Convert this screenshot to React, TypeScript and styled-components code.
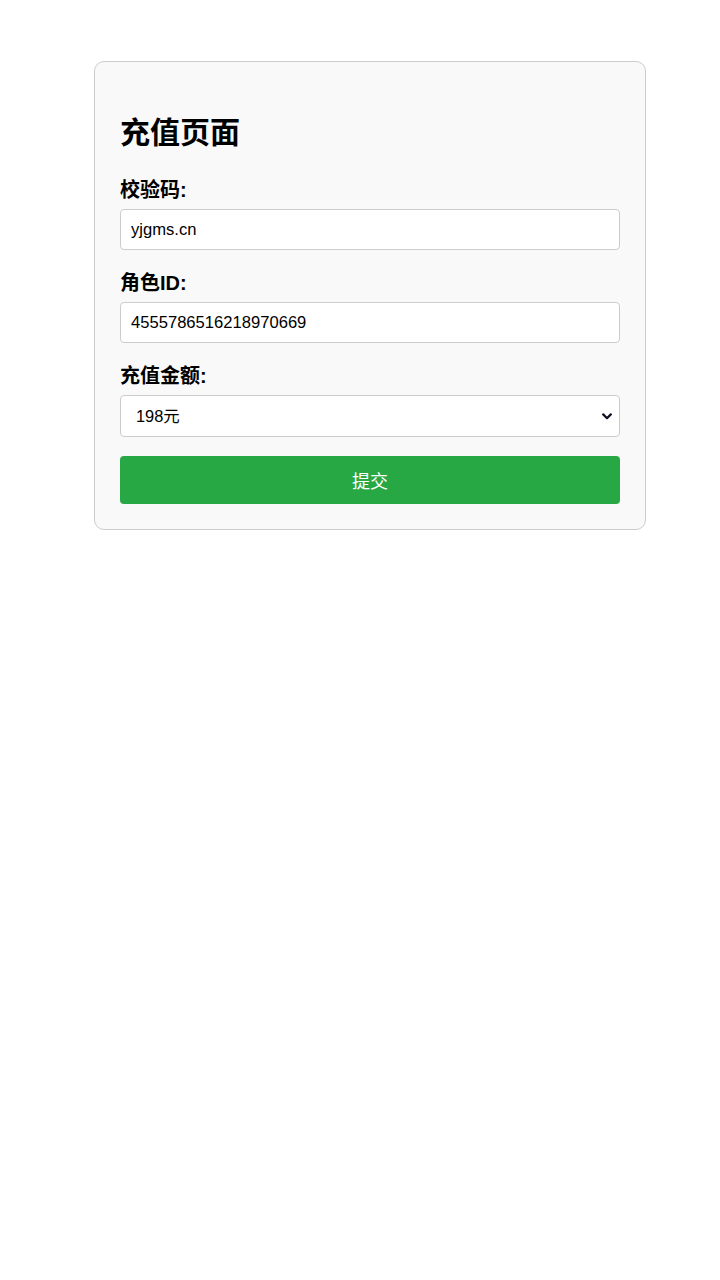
import React from "react";
import styled, { createGlobalStyle } from "styled-components";

const Global = createGlobalStyle`
  body {
    margin: 0;
    background: #fff;
    font-family: "Liberation Sans", Arial, "Noto Sans CJK SC", sans-serif;
    color: #000;
  }
`;

const Page = styled.div`
  display: flex;
  justify-content: center;
  padding: 61px 0 0 20px;
`;

const Card = styled.form`
  width: 500px;
  padding: 25px;
  background: #f9f9f9;
  border: 1px solid #ccc;
  border-radius: 10px;
  display: flex;
  flex-direction: column;
`;

const Title = styled.h2`
  margin: 28px 0 27px;
  font-size: 30px;
  line-height: 36px;
  font-weight: bold;
`;

const Label = styled.label`
  display: block;
  font-size: 20px;
  font-weight: bold;
  line-height: 24px;
  margin-bottom: 7px;
`;

const Field = styled.div`
  display: flex;
  flex-direction: column;
  margin-bottom: 21px;
`;

const Input = styled.input`
  box-sizing: border-box;
  width: 100%;
  height: 41px;
  padding: 10px;
  font-size: 16.6px;
  font-family: "Liberation Sans", Arial, "Noto Sans CJK SC", sans-serif;
  border: 1px solid #ccc;
  border-radius: 4px;
  background: #fff;
  color: #000;
  outline: none;
`;

const SelectWrap = styled.div`
  position: relative;
  width: 100%;
`;

const Select = styled.select`
  box-sizing: border-box;
  width: 100%;
  height: 42px;
  padding: 10px 30px 10px 15px;
  font-size: 16.4px;
  font-family: "Liberation Sans", Arial, "Noto Sans CJK SC", sans-serif;
  border: 1px solid #ccc;
  border-radius: 4px;
  background: #fff;
  color: #000;
  appearance: none;
  -webkit-appearance: none;
  outline: none;
`;

const Chevron = styled.svg`
  position: absolute;
  right: 8px;
  top: 18px;
  width: 10px;
  height: 7px;
  pointer-events: none;
`;

const Button = styled.button`
  height: 48px;
  width: 100%;
  border: none;
  border-radius: 4px;
  background: #28a745;
  color: #fff;
  font-size: 18px;
  font-family: "Liberation Sans", Arial, "Noto Sans CJK SC", sans-serif;
  margin-top: -2px;
`;

export default function App() {
  return (
    <>
      <Global />
      <Page>
        <Card onSubmit={(e) => e.preventDefault()}>
          <Title>充值页面</Title>
          <Field>
            <Label>校验码:</Label>
            <Input defaultValue="yjgms.cn" />
          </Field>
          <Field>
            <Label>角色ID:</Label>
            <Input defaultValue="4555786516218970669" />
          </Field>
          <Field>
            <Label>充值金额:</Label>
            <SelectWrap>
              <Select defaultValue="198">
                <option value="198">198元</option>
              </Select>
              <Chevron viewBox="0 0 10 7">
                <path
                  d="M1.2 1.4 L5 5.2 L8.8 1.4"
                  fill="none"
                  stroke="#111122"
                  strokeWidth="2.2"
                  strokeLinecap="round"
                  strokeLinejoin="round"
                />
              </Chevron>
            </SelectWrap>
          </Field>
          <Button type="submit">提交</Button>
        </Card>
      </Page>
    </>
  );
}
